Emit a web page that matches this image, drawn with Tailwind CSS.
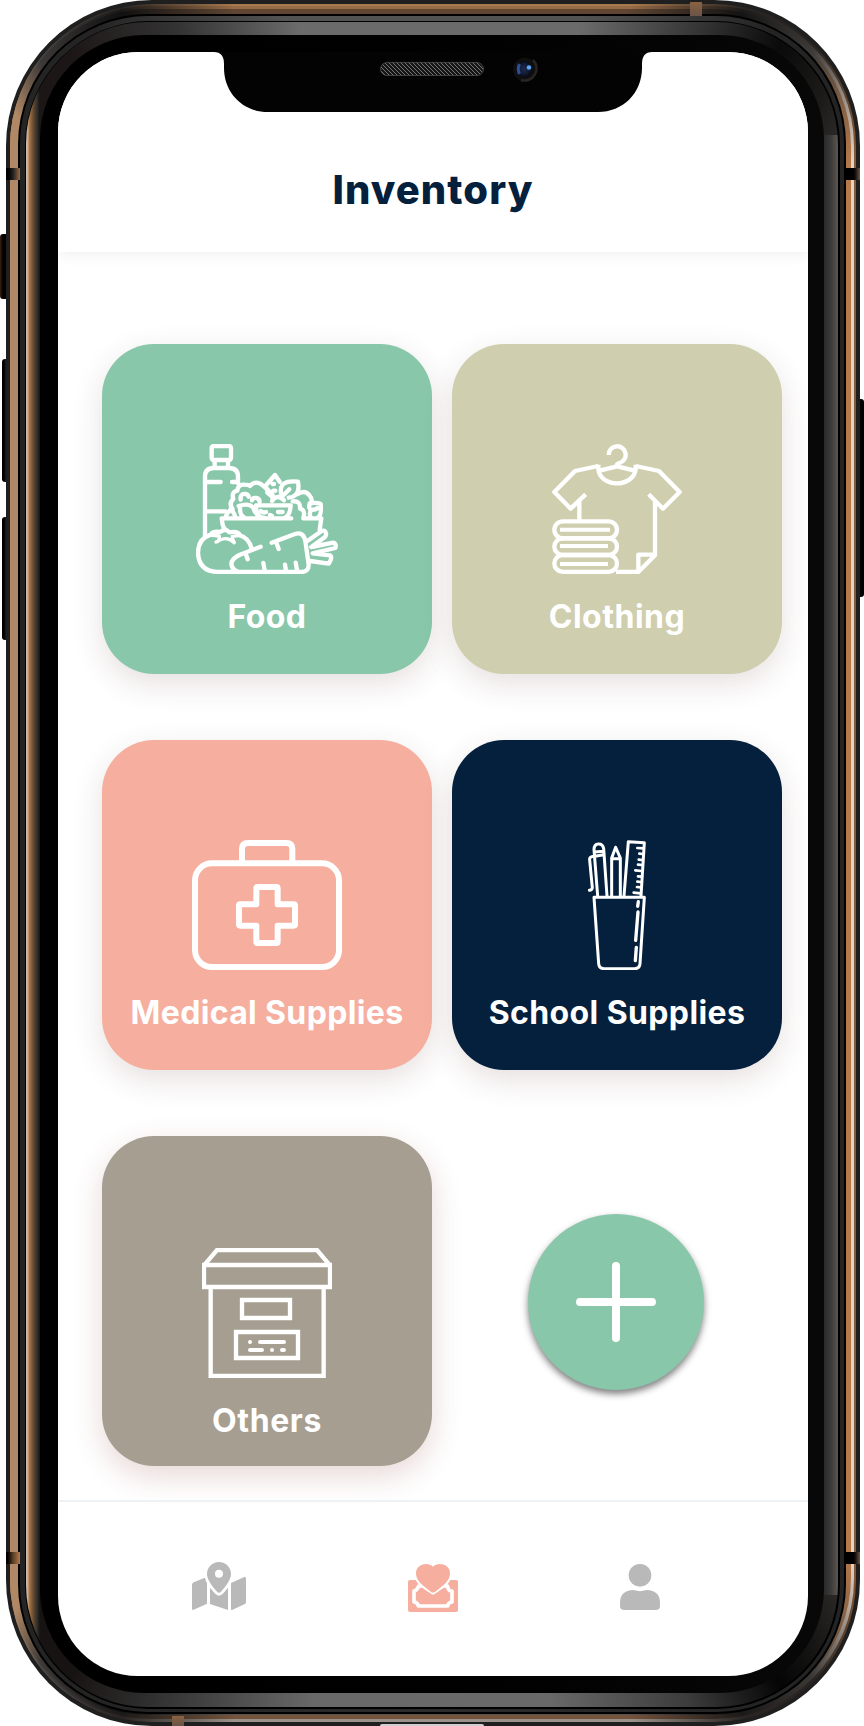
<!DOCTYPE html>
<html lang="en">
<head>
<meta charset="utf-8">
<meta name="viewport" content="width=device-width, initial-scale=1">
<title>Inventory</title>
<script src="https://cdn.jsdelivr.net/npm/@tailwindcss/browser@4"></script>
</head>
<body class="bg-white overflow-hidden font-['Inter',sans-serif]">
<div class="relative w-[864px] h-[1726px] pl-[6px] pr-[4px] overflow-hidden">
  <!-- side buttons -->
  <div class="absolute left-0 top-[234px] w-[8px] h-[65px] rounded-l-[3px] bg-linear-to-r from-[#3a2414] via-black to-[#181818]"></div>
  <div class="absolute left-[2px] top-[359px] w-[8px] h-[123px] rounded-l-[3px] bg-linear-to-r from-black via-[#1c1c1c] to-black"></div>
  <div class="absolute left-[2px] top-[517px] w-[8px] h-[123px] rounded-l-[3px] bg-linear-to-r from-black via-[#1c1c1c] to-black"></div>
  <div class="absolute right-0 top-[399px] w-[8px] h-[198px] rounded-r-[3px] bg-linear-to-r from-[#222] to-black"></div>

  <!-- metal frame, ring by ring -->
  <div class="relative h-[1726px] p-[4px] rounded-[146px] bg-[#1f1f1f]">
   <div class="h-full pt-[2px] pr-[2px] pb-[3px] rounded-[142px] bg-[conic-gradient(#a8794f_0deg_13deg,#2a2522_20deg,#2a2522_25deg,#8a5a35_31deg_149deg,#2a2522_155deg,#2a2522_160deg,#9a938d_167deg_193deg,#2a2522_200deg,#504b49_206deg,#b08865_209deg_331deg,#504b49_334deg,#2a2522_340deg,#a8794f_347deg)]">
    <div class="h-full pt-[3px] pr-[3px] pb-[4px] rounded-[140px] bg-[conic-gradient(#976b45_0deg_13deg,#1c1a19_20deg,#3a3735_25deg,#e2d3c6_31deg_149deg,#3a3735_155deg,#1c1a19_160deg,#75523a_167deg_193deg,#1c1a19_200deg,#44403f_206deg,#b08865_209deg_331deg,#44403f_334deg,#1c1a19_340deg,#976b45_347deg)]">
     <div class="h-full pt-[5px] pr-[5px] pb-[1px] pl-[8px] rounded-[138px] bg-[conic-gradient(#5f4532_0deg_13deg,#141414_20deg,#3b3a38_25deg,#b5794a_31deg_149deg,#3b3a38_155deg,#111_160deg,#555_167deg_193deg,#111_200deg,#3c3938_206deg,#b08865_209deg_331deg,#3c3938_334deg,#111_340deg,#5f4532_347deg)]">
      <div class="h-full p-[2px] rounded-[130px] bg-black">
       <div class="h-full pt-[5px] pr-[4px] pb-[3px] pl-[5px] rounded-[128px] bg-[conic-gradient(#535353_0deg_10deg,#242424_22deg_158deg,#2c2c2c_180deg,#242424_202deg_338deg,#535353_350deg)]">
        <div class="h-full pt-[1px] pr-[2px] pb-[2px] pl-[1px] rounded-[124px] bg-black">
         <div class="h-full pt-[13px] pr-[14px] pb-[14px] pl-[14px] rounded-[122px] bg-[linear-gradient(90deg,#d2c2b4_0px,#c6ab93_2px,#b07c50_3px,#8e6238_5px,#5b4530_8px,#33302d_11px,#141414_14px,transparent_14px),linear-gradient(90deg,#2a2a2a,#3c3a38_7px,#5c5651_14px),conic-gradient(#6b6b6b_0deg_10deg,#333_18deg,#0a0a0a_23deg,#1c1b1a_27deg,#45423f_33deg_147deg,#1c1b1a_153deg,#050505_157deg,#3c3c3c_163deg,#696969_172deg_188deg,#333_198deg,#171312_204deg,#1c1716_336deg,#333_343deg,#6b6b6b_351deg)] bg-no-repeat [background-size:14px_1590px,14px_1460px,100%_100%] [background-position:0_48px,100%_50%,0_0]">
          <div class="h-full pt-[17px] pr-[16px] pb-[17px] pl-[18px] rounded-[104px] bg-linear-to-r from-black to-[#080808]">

           <!-- screen -->
           <div class="relative h-full rounded-[80px] bg-white overflow-hidden flex flex-col">
            <header class="relative h-[200px] shrink-0 pt-[114px] bg-white shadow-[0_2px_14px_rgba(0,0,0,0.07)]">
              <h1 class="text-center text-[40px] leading-[48px] font-extrabold tracking-[1.1px] text-[#04203d]">Inventory</h1>
              <!-- notch -->
              <svg class="absolute left-[156px] top-0" width="438" height="61" viewBox="0 0 438 61">
                <path d="M0 -1V0Q10 0 10 12V16C10 41 29 60 54 60H384C409 60 428 41 428 16V12Q428 0 438 0V-1Z" fill="#030303"/>
                <defs><pattern id="mesh" width="4" height="4" patternUnits="userSpaceOnUse"><rect width="4" height="4" fill="#161616"/><path d="M0 0L4 4M3 -1L5 1M-1 3L1 5" stroke="#777" stroke-width="1"/></pattern>
                <radialGradient id="lens"><stop offset="0" stop-color="#1c2c50"/><stop offset="0.6" stop-color="#131c35"/><stop offset="1" stop-color="#070a14"/></radialGradient></defs>
                <rect x="166.500" y="10.500" width="103" height="13" rx="6.500" fill="url(#mesh)" stroke="#555" stroke-width="0.700"/>
                <circle cx="311" cy="17.500" r="12" fill="#100f0f"/>
                <path d="M319 8A12 12 0 0 1 307 28" fill="none" stroke="#282523" stroke-width="2.500"/>
                <circle cx="310" cy="17" r="8" fill="url(#lens)"/>
                <path d="M305.500 12Q303 17 305.500 22" fill="none" stroke="#2e4f96" stroke-width="3"/>
                <circle cx="315" cy="15.500" r="2.300" fill="#5aa5f5"/>
              </svg>
            </header>

            <main class="h-[1248px] shrink-0 pt-[92px] pl-[44px]">
              <div class="grid grid-cols-[330px_330px] auto-rows-[330px] gap-x-[20px] gap-y-[66px]">
                <section class="flex flex-col items-center rounded-[52px] bg-[#89c7aa] pt-[100px] shadow-[0_10px_30px_rgba(90,50,40,0.15)]">
                  <svg width="142" height="130" viewBox="48 42 426 390" fill="none" stroke="#fff" stroke-width="13" stroke-linecap="round" stroke-linejoin="round">
                    <rect x="95" y="48" width="58" height="42" rx="6"/>
                    <path d="M104 92V113M144 92V113M75 322V140Q75 114 101 114H147Q174 114 174 140V160M80 156H122M156 156H174M80 244H136"/>
                    <path d="M125 265H334M370 265H424L419 299M125 265Q126 283 134 300"/>
                    <path d="M138 258Q145 240 158 238Q145 220 160 207Q153 186 172 182Q174 162 194 164Q206 164 210 168Q229 148 250 168Q265 176 262 188Q274 196 280 206"/>
                    <path d="M152 238Q162 248 165 258M182 209Q180 190 196 192Q204 193 206 200M216 211Q218 202 229 204Q239 206 239 216M176 228Q205 218 219 232M180 234Q180 255 190 260M219 232Q225 252 244 264"/>
                    <path d="M228 226H332M228 226Q227 264 254 264M332 226Q330 260 312 264M256 168L285 135L299 155M262 178L278 194M278 162H282M280 182H286"/>
                    <path d="M303 190Q296 148 354 155Q362 199 326 203M308 198L328 178M276 213Q292 190 312 211"/>
                    <path d="M352 193Q374 178 388 196Q398 206 394 220M338 214Q362 212 360 236Q376 240 371 260M389 220Q412 217 422 222Q425 253 416 260M389 222Q384 236 394 239Q408 240 412 234M391 244Q388 254 392 262M242 243Q250 250 258 246M294 246L308 246M270 255L276 258"/>
                    <path d="M92 314Q54 326 54 368Q56 422 110 426H364Q387 426 386 403L376 333Q370 304 345 312L275 338M92 314Q98 303 119 306L136 298L148 307Q175 302 180 316Q207 324 215 356"/>
                    <path d="M96 316L118 318Q119 335 108 336Q126 326 137 326Q150 326 163 338Q156 326 157 319L181 316" stroke-width="10"/>
                    <path d="M242 350L178 375Q148 390 156 410Q161 422 175 426M198 374L203 388M289 338L296 357M250 399L254 422M315 404L318 424M347 398L351 420"/>
                    <path d="M382 333L424 304Q435 298 438 310Q440 320 428 326L394 351L460 338Q470 340 466 354L398 370L450 376Q456 380 452 390L446 401L390 393"/>
                  </svg>
                  <h2 class="mt-[23px] text-[32px] leading-[40px] font-bold tracking-[0.4px] text-white">Food</h2>
                </section>

                <section class="flex flex-col items-center rounded-[52px] bg-[#cfceaf] pt-[100px] shadow-[0_10px_30px_rgba(90,50,40,0.15)]">
                  <svg width="130" height="130" viewBox="66 42 390 390" fill="none" stroke="#fff" stroke-width="13" stroke-linejoin="round">
                    <path d="M236 75A25.500 25.500 0 1 1 268 99Q260 101 260 107"/>
                    <path d="M212 121L261 109L311 121M205 108L135 123L73 186L122 236L167 193M148 212V270M317 108L387 123L449 186L399 236L356 193M375 212V376L325 426H258M325 426V374H375M205 104V118C211 174 309 174 317 118V104"/>
                    <rect x="73" y="274" width="188" height="51" rx="25.500"/><rect x="73" y="325" width="188" height="50" rx="25"/><rect x="73" y="375" width="188" height="50.500" rx="25"/>
                    <path d="M90 299H240M90 348H234M90 402H234" stroke-linejoin="miter" stroke-width="12"/>
                  </svg>
                  <h2 class="mt-[23px] text-[32px] leading-[40px] font-bold tracking-[0.5px] text-white">Clothing</h2>
                </section>

                <section class="flex flex-col items-center rounded-[52px] bg-[#f6ae9f] pt-[100px] shadow-[0_10px_30px_rgba(90,50,40,0.15)]">
                  <svg width="150" height="130" viewBox="216 60 450 390" fill="none" stroke="#fff" stroke-width="18" stroke-linejoin="round">
                    <rect x="225" y="130" width="432" height="311" rx="51"/>
                    <path d="M366 128V87Q366 69 384 69H499Q517 69 517 87V128"/>
                    <path d="M409 205Q409 201 413 201H469Q473 201 473 205V253H521Q525 253 525 257V313Q525 317 521 317H473V365Q473 369 469 369H413Q409 369 409 365V317H361Q357 317 357 313V257Q357 253 361 253H409Z"/>
                  </svg>
                  <h2 class="mt-[23px] text-[32px] leading-[40px] font-bold tracking-[0.35px] whitespace-nowrap text-white">Medical Supplies</h2>
                </section>

                <section class="flex flex-col items-center rounded-[52px] bg-[#04203d] pt-[100px] shadow-[0_10px_30px_rgba(90,50,40,0.15)]">
                  <svg width="58" height="130" viewBox="354 60 174 390" fill="none" stroke="#fff" stroke-width="9" stroke-linecap="round" stroke-linejoin="round">
                    <path d="M372 232H523L510 431Q509 446 494 446H402Q387 446 386 431Z"/>
                    <path d="M383 228L372 89Q372 73 385 72Q398 71 401 86L411 228M374 96L400 94M375 109L401 104M372 109Q357 110 359 120L367 203Q366 210 358 211"/>
                    <path d="M425 228V114L437 82L451 114V228M425 116H451M437 82V90M462 228L475 65L523 68L513 228"/>
                    <path d="M502 84L520 85M508 101L518 102M506 119L517 120M504 134L516 135M496 151L514 153M504 169L514 170M502 185L513 186M501 201L512 202M491 218L512 220" stroke-width="8"/>
                    <path d="M505 245L503 259M504 276L497 361M499 382L496 422" stroke-width="10"/>
                  </svg>
                  <h2 class="mt-[23px] text-[32px] leading-[40px] font-bold tracking-[0.4px] whitespace-nowrap text-white">School Supplies</h2>
                </section>

                <section class="flex flex-col items-center rounded-[52px] bg-[#a59e91] pt-[112px] shadow-[0_10px_30px_rgba(120,40,30,0.18)]">
                  <svg width="130" height="130" viewBox="66 54 390 390" fill="none" stroke="#fff" stroke-width="13">
                    <path d="M72 105H450V171H72ZM74 104L111 60H411L448 104M92 171V438H431V171M186 210H330V264H186ZM168 306H354V384H168Z"/>
                    <path d="M210 336H210.100M240 336H312M210 360H246M276 360H276.100M306 360H312" stroke-linecap="round" stroke-width="12"/>
                  </svg>
                  <h2 class="mt-[23px] text-[32px] leading-[40px] font-bold tracking-[0.6px] text-white">Others</h2>
                </section>

                <div class="flex items-start pl-[76px] pt-[78px]">
                  <button aria-label="Add category" class="flex size-[176px] items-center justify-center rounded-full bg-[#89c7aa] shadow-[0_4px_7px_rgba(0,0,0,0.5)]">
                    <svg width="80" height="80" viewBox="0 0 80 80" fill="none" stroke="#fff" stroke-width="8" stroke-linecap="round"><path d="M40 4V76M4 40H76"/></svg>
                  </button>
                </div>
              </div>
            </main>

            <nav class="flex grow items-start border-t-2 border-[#edf2f6] pt-[60px] pl-[134px]">
              <svg width="54" height="48" viewBox="66 66 162 144" fill="#b9b9b9">
                <path fill-rule="evenodd" d="M147 66C127 66 111 81 111 102C111 119 126 138 140 154Q147 163 154 154C168 138 183 119 183 102C183 81 167 66 147 66ZM147 89A12 12 0 1 1 147 113A12 12 0 1 1 147 89Z"/>
                <path d="M66 134Q66 129 71 127L101 115Q105 113 106 116Q107 123 111 129V191L71 209Q66 211 66 206ZM120 143L134 160Q147 174 160 160L174 143V210L120 192ZM183 129L223 111Q228 110 228 115V186Q228 191 223 193L188 209Q183 211 183 208Z"/>
              </svg>
              <svg class="ml-[162px] mt-[2px]" width="50" height="48" viewBox="714 72 150 144" fill="#f6ae9f">
                <rect x="714" y="120" width="150" height="96" rx="6"/>
                <path d="M746 138H832L836 149Q838 152 846 153V186Q834 187 833 198H745Q743 187 732 186V153Q742 151 746 138Z" stroke="#fff" stroke-width="11" stroke-linejoin="round"/>
                <path d="M789 80C776 66 739 70 738 99C738 115 747 126 758 136L789 157L820 136C831 126 840 115 840 99C839 70 802 66 789 80Z" stroke="#fff" stroke-width="13" stroke-linejoin="round"/>
                <path d="M706 60H739V119H706ZM839 60H872V119H839Z" fill="#fff"/>
                <path d="M789 80C776 66 739 70 738 99C738 115 747 126 758 136L782 155Q789 160 796 155L820 136C831 126 840 115 840 99C839 70 802 66 789 80Z"/>
              </svg>
              <svg class="ml-[162px] mt-[2px]" width="40" height="46" viewBox="1350 72 120 138" fill="#b9b9b9">
                <circle cx="1410" cy="106" r="34"/>
                <path d="M1386 150Q1390 150 1394 151Q1410 156 1426 151Q1430 150 1434 150Q1470 154 1470 188V197Q1470 210 1457 210H1363Q1350 210 1350 197V188Q1350 154 1386 150Z"/>
              </svg>
            </nav>
           </div>

          </div>
         </div>
        </div>
       </div>
      </div>
     </div>
    </div>
   </div>
  </div>

  <!-- antenna bands -->
  <div class="absolute left-[6px] top-[168px] w-[14px] h-[12px] bg-linear-to-r from-black via-[#222] to-[#9a6a40]"></div>
  <div class="absolute left-[6px] top-[1552px] w-[14px] h-[12px] bg-linear-to-r from-black via-[#5a4028] to-[#b5794a]"></div>
  <div class="absolute right-[4px] top-[168px] w-[15px] h-[12px] bg-linear-to-r from-black via-black to-[#6a5648]"></div>
  <div class="absolute right-[4px] top-[1552px] w-[15px] h-[12px] bg-linear-to-r from-black via-black to-[#6a5648]"></div>
  <div class="absolute left-[690px] top-[2px] w-[12px] h-[14px] bg-linear-to-b from-[#8a6240] to-[#6a5448]"></div>
  <div class="absolute left-[172px] top-[1716px] w-[12px] h-[10px] bg-linear-to-b from-[#8a6240] to-[#6a5448]"></div>
  <!-- charging port -->
  <div class="absolute left-[380px] bottom-0 w-[104px] h-[2px] rounded-t-[2px] bg-[#d0d0d0]"></div>
</div>
</body>
</html>
